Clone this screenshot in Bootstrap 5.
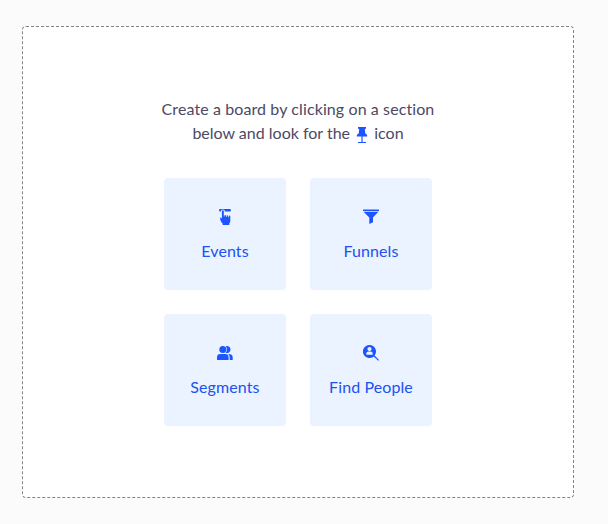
<!DOCTYPE html>
<html lang="en">
<head>
<meta charset="utf-8">
<meta name="viewport" content="width=device-width, initial-scale=1">
<title>Create a board</title>
<link href="https://cdn.jsdelivr.net/npm/bootstrap@5.3.0/dist/css/bootstrap.min.css" rel="stylesheet">
<style>
body { background: #fbfbfb; font-family: Lato, "Open Sans", sans-serif; font-size: 16px; line-height: 24px; color: #4c4964; padding: 26px 34px 26px 22px; }
.board-empty { height: 472px; border: 1px dashed #858585; border-radius: 4px; padding-top: 70px; }
.hint { margin-bottom: 33px; }
.pin { width: 16px; height: 16px; vertical-align: -4px; }
.tiles { grid-template-columns: 122px 122px; gap: 24px; }
.tile { height: 112px; border-radius: 4px; background: #eaf3ff; color: #2151f0; padding-top: 31px; letter-spacing: .1px; }
.tile svg { width: 16px; height: 16px; margin-bottom: 14px; }
.pin, .tile svg { fill: #1c55ff; }
.ln1 { letter-spacing: .1px; }
.ln2 { letter-spacing: 0; }
</style>
</head>
<body>
<main class="board-empty bg-white d-flex flex-column align-items-center">
  <p class="hint text-center text-nowrap">
    <span class="ln1 d-block">Create a board by clicking on a section</span>
    <span class="ln2 d-block">below and look for the
      <svg class="pin" viewBox="0 0 16 16"><path d="M4 0h8v1.600l-1.200.7.5 4.200C12.500 7 13.300 8 13.300 9.400H8.600V15H12v1H4v-1h3.400V9.400H2.700C2.700 8 3.500 7 4.700 6.500l.5-4.200L4 1.600z"/></svg>
      icon</span>
  </p>
  <nav class="tiles d-grid" aria-label="Board sections">
    <a href="#" class="tile text-decoration-none d-flex flex-column align-items-center">
      <svg viewBox="0 0 16 16"><path d="M3.300 0h9.400a1.300 1.300 0 0 1 0 2.600H7.900A2 2 0 0 0 3.900 2.600H3.300a1.300 1.300 0 0 1 0-2.600z"/><path d="M4.900 2.300a.95.950 0 0 1 1.900 0V7.400h.6V6.700a.75.750 0 0 1 1.500 0V8h.7V6.900a.75.750 0 0 1 1.500 0V8.200h.7V7.300a.75.750 0 0 1 1.500 0V11.500c0 1.500-.4 2.300-1 3V15.400q0 .6-.6.600H6.200q-.6 0-.6-.6V14.600C4.400 13.600 3.500 11.800 3.100 10V9.200c0-.8 1-.9 1.300-.2l.5.800z"/></svg>
      <span>Events</span>
    </a>
    <a href="#" class="tile text-decoration-none d-flex flex-column align-items-center">
      <svg viewBox="0 0 16 16"><path d="M.5.400h15q.5 0 .5.500v.7q0 .5-.5.500H.5Q0 2.100 0 1.600V.900Q0 .400.500.400zM.6 2.800h14.800L10 8.400v4.900L6.300 15V8.400z"/></svg>
      <span>Funnels</span>
    </a>
    <a href="#" class="tile text-decoration-none d-flex flex-column align-items-center">
      <svg viewBox="0 0 16 16"><circle cx="5.800" cy="4.500" r="3.500"/><path d="M8.600 1.300a3.500 3.500 0 1 1 0 6.400 4.500 4.500 0 0 0 0-6.400zM0 15v-2.600Q0 9 3.400 9h4.800q3.400 0 3.400 3.400V15zM11.200 9.100c3 0 4.500 1.100 4.500 3.500V15h-3v-2.600q0-2-1.500-3.300z"/></svg>
      <span>Segments</span>
    </a>
    <a href="#" class="tile text-decoration-none d-flex flex-column align-items-center">
      <svg viewBox="0 0 16 16"><path fill-rule="evenodd" d="M6.500 0a6.500 6.500 0 0 1 5.100 10.500L16 15l-.8.800-4.500-4.400A6.500 6.500 0 1 1 6.500 0zM6.500 1.900a2.100 2.100 0 1 0 0 4.200 2.100 2.100 0 0 0 0-4.200zM3.300 9.800h6.400V8.900c0-1.500-1-2.300-2.200-2.300h-2c-1.200 0-2.200.8-2.200 2.300z"/></svg>
      <span>Find People</span>
    </a>
  </nav>
</main>
<script src="https://cdn.jsdelivr.net/npm/bootstrap@5.3.0/dist/js/bootstrap.bundle.min.js"></script>
</body>
</html>
